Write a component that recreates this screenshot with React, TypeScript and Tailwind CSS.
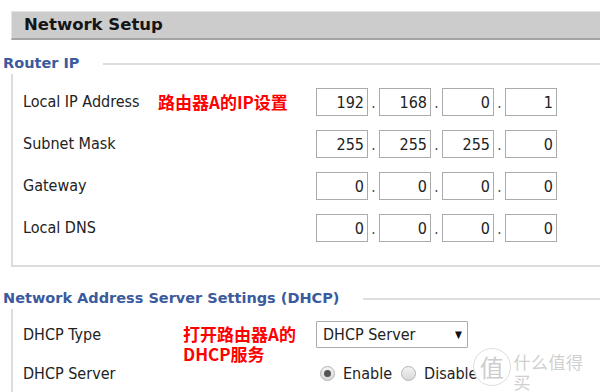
import React from 'react';

interface IpRow {
    label: string;
    values: string[];
    note?: string;
}

const rows: IpRow[] = [
    { label: 'Local IP Address', values: ['192', '168', '0', '1'], note: '路由器A的IP设置' },
    { label: 'Subnet Mask', values: ['255', '255', '255', '0'] },
    { label: 'Gateway', values: ['0', '0', '0', '0'] },
    { label: 'Local DNS', values: ['0', '0', '0', '0'] },
];

const SectionTitle: React.FC<{ title: string }> = ({ title }) => (
    <div className="flex items-center h-[20px] pl-[3px]">
        <span className="font-['DejaVu_Sans',sans-serif] font-bold text-[14.5px] text-[#3c5a9e] whitespace-nowrap">
            {title}
        </span>
        <div className="flex-1 ml-[24px] h-[2px] bg-[#dedede]" />
    </div>
);

const Radio: React.FC<{ checked?: boolean }> = ({ checked }) => (
    <span className="w-[15px] h-[15px] rounded-full border border-[#b4b4b4] bg-gradient-to-b from-[#f4f4f4] to-[#d8d8d8] flex items-center justify-center shrink-0">
        {checked && <span className="w-[7px] h-[7px] rounded-full bg-[#555]" />}
    </span>
);

export default function App() {
    return (
        <div className="relative w-[600px] h-[392px] overflow-hidden bg-white font-['DejaVu_Sans_Condensed','DejaVu_Sans',sans-serif] text-[#222]">
            <div className="pt-[11px] pl-[11px]">
                <div className="h-[29px] bg-[#cccccc] border-t border-l border-[#e4e4e4] border-b-2 border-b-[#a4a4a4] flex items-center pl-[12px]">
                    <span className="font-['DejaVu_Sans',sans-serif] font-bold text-[16.5px] text-[#151515]">Network Setup</span>
                </div>
            </div>

            <div className="mt-[14px]">
                <SectionTitle title="Router IP" />
            </div>
            <div className="ml-[11px] border-l-2 border-b-2 border-[#dcdcdc] pt-[7px] pb-[16px]">
                {rows.map((row) => (
                    <div key={row.label} className="h-[42px] flex items-center pl-[10px]">
                        <div className="w-[293px] flex items-center">
                            <div className="w-[135px]">
                                <span className="text-[16px] whitespace-nowrap">{row.label}</span>
                            </div>
                            {row.note && (
                                <span className="font-['Noto_Sans_CJK_SC',sans-serif] font-bold text-[17px] leading-[20px] text-[#ff0000] whitespace-nowrap">
                                    {row.note}
                                </span>
                            )}
                        </div>
                        <div className="flex items-center">
                            {row.values.map((v, i) => (
                                <React.Fragment key={i}>
                                    <input
                                        readOnly
                                        value={v}
                                        className="w-[52px] h-[28px] border border-[#ababab] bg-white text-right pr-[3px] text-[16px] text-[#222] outline-none"
                                    />
                                    {i < 3 && (
                                        <span className="w-[11px] h-[28px] flex items-end justify-center pb-[5px] text-[15px] leading-none text-[#445]">.</span>
                                    )}
                                </React.Fragment>
                            ))}
                        </div>
                    </div>
                ))}
            </div>

            <div className="mt-[22px]">
                <SectionTitle title="Network Address Server Settings (DHCP)" />
            </div>
            <div className="ml-[11px] border-l-2 border-[#dcdcdc] pt-[6px]">
                <div className="h-[39px] flex items-center pl-[10px]">
                    <div className="w-[293px] flex items-center">
                        <div className="w-[160px]">
                            <span className="text-[16px] whitespace-nowrap">DHCP Type</span>
                        </div>
                        <span className="relative top-[9px] font-['Noto_Sans_CJK_SC',sans-serif] font-bold text-[17px] leading-[20px] text-[#ff0000] whitespace-nowrap">
                            打开路由器A的
                            <br />
                            DHCP服务
                        </span>
                    </div>
                    <div className="w-[152px] h-[27px] border border-[#ababab] rounded-[1px] bg-white flex items-center justify-between pl-[6px] pr-[5px] text-[16px]">
                        <span>DHCP Server</span>
                        <span className="text-[10px] text-[#111]">▼</span>
                    </div>
                </div>
                <div className="h-[39px] flex items-center pl-[10px]">
                    <div className="w-[293px] text-[16px]">DHCP Server</div>
                    <div className="flex items-center text-[16px] pl-[4px]">
                        <Radio checked />
                        <span className="ml-[8px]">Enable</span>
                        <span className="ml-[9px]"><Radio /></span>
                        <span className="ml-[8px]">Disable</span>
                    </div>
                </div>
            </div>

            <div className="absolute left-[473px] top-[348px] flex items-start">
                <div className="w-[38px] h-[38px] rounded-full bg-white/90 border border-[#dedede] flex items-center justify-center font-['Noto_Sans_CJK_SC',sans-serif] text-[24px] text-[#cdcdcd] leading-none">
                    值
                </div>
                <div className="ml-[3px] mt-[4px] flex flex-col">
                    <span className="font-['Noto_Sans_CJK_SC',sans-serif] text-[17px] leading-[20px] text-[#d0d0d0] tracking-[0.5px]">什么值得买</span>
                    <span className="mt-[1px] font-['Noto_Sans_CJK_SC',sans-serif] text-[7px] leading-[9px] text-[#d6d6d6] tracking-[1.8px] whitespace-nowrap">认真生活·好好花钱</span>
                </div>
            </div>
        </div>
    );
}
